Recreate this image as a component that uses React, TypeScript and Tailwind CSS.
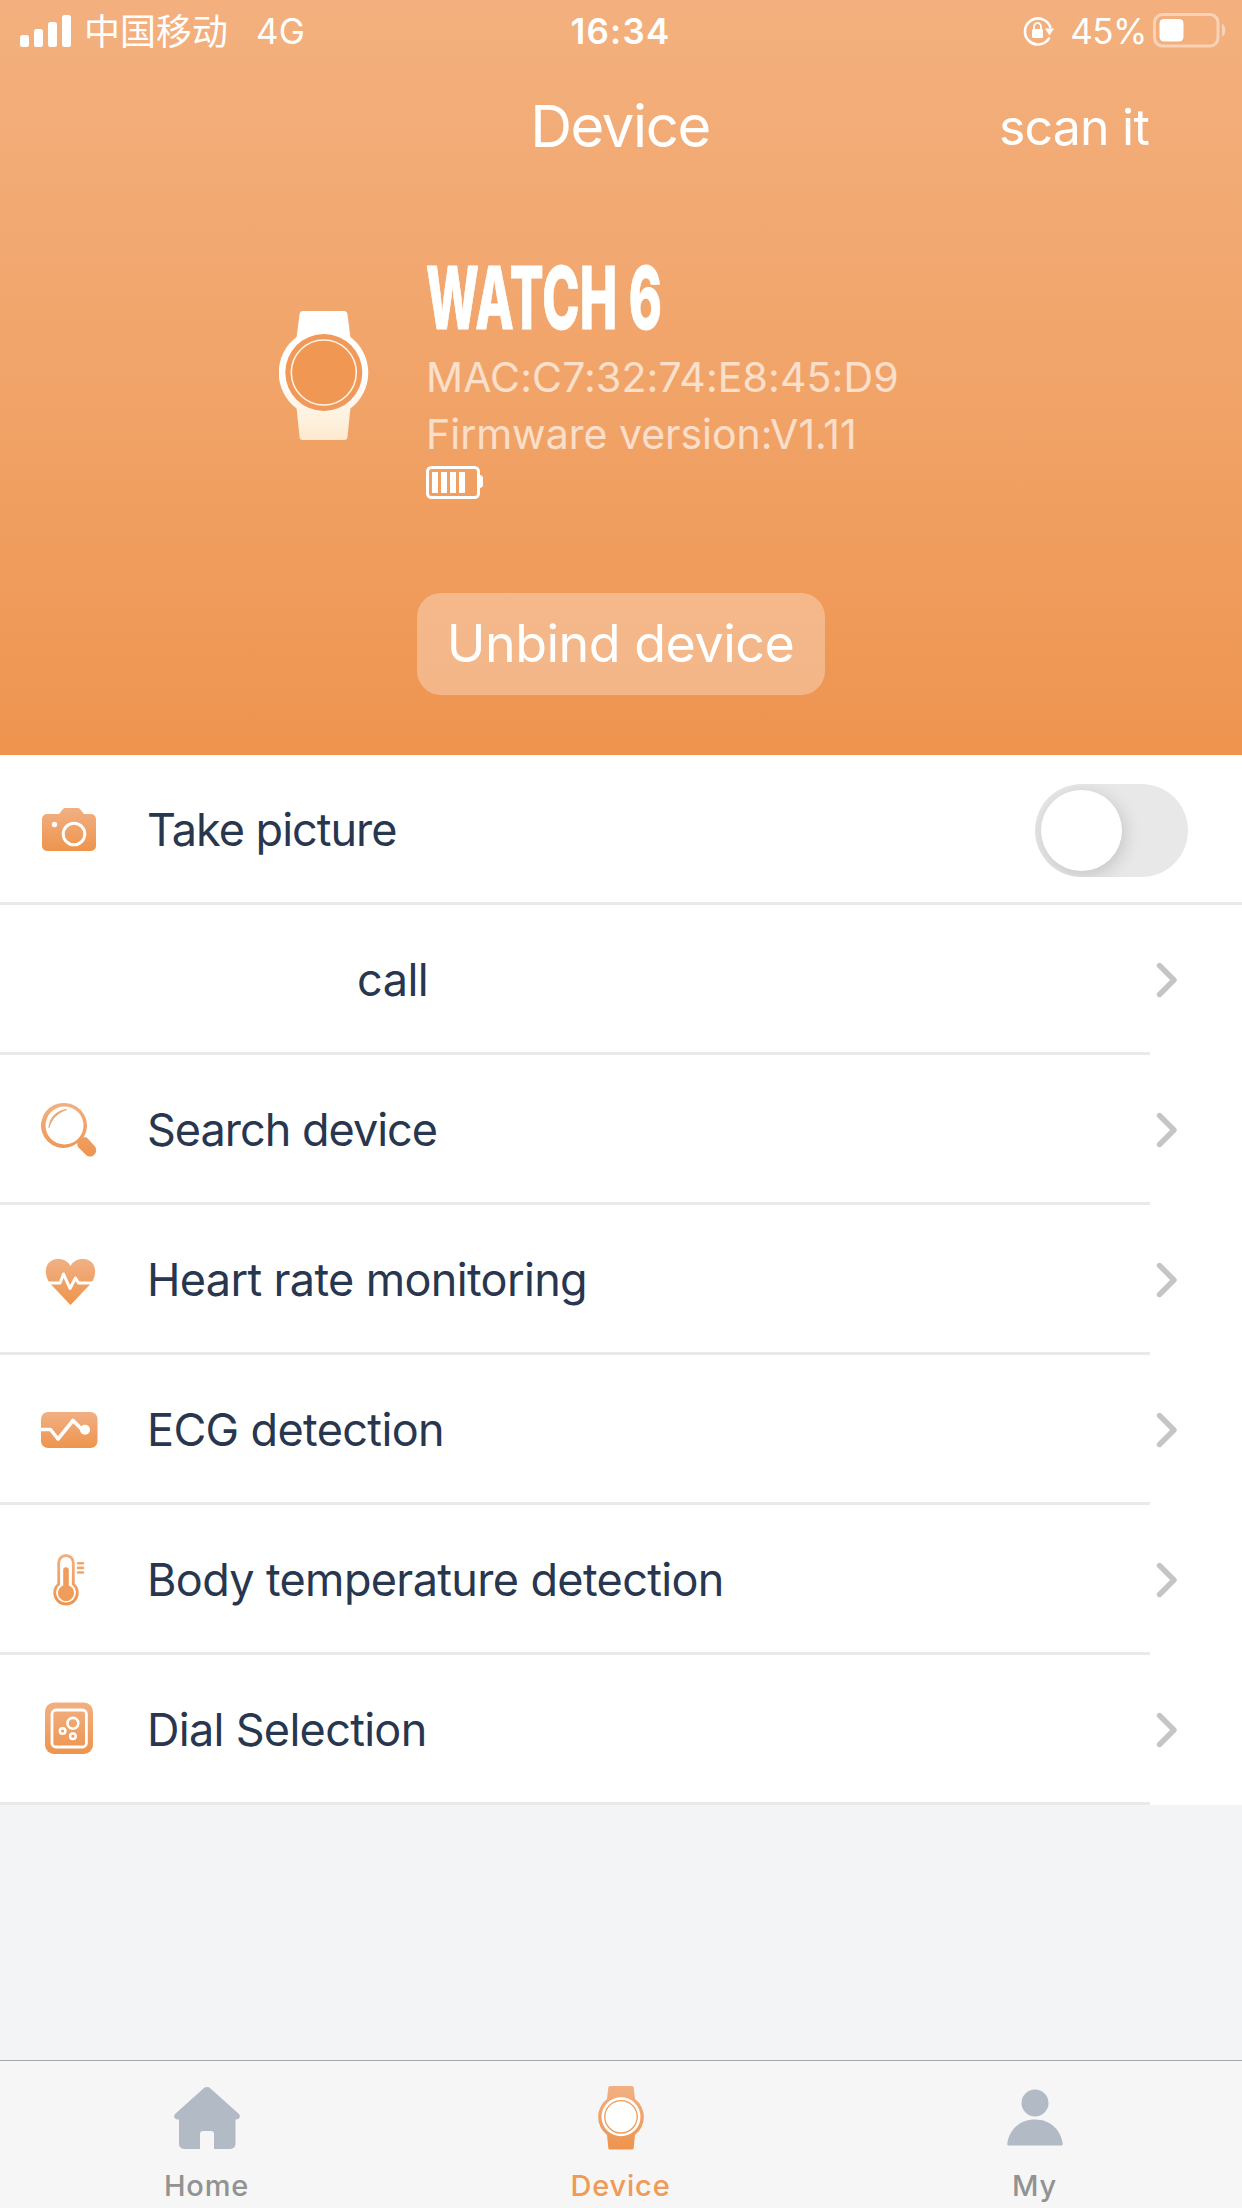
import type { ReactNode } from "react"

type RowProps = {
    label: string
    icon?: ReactNode
    indent?: boolean
    track?: string
}

const Gradient = ({ id }: { id: string }) => (
    <defs>
        <linearGradient id={id} x1="0" y1="0" x2="0" y2="1">
            <stop offset="0" stopColor="#f1b083" />
            <stop offset="1" stopColor="#ee944d" />
        </linearGradient>
    </defs>
)

const CameraIcon = () => (
    <svg width="60" height="60" viewBox="0 0 60 60">
        <Gradient id="camera" />
        <path fill="url(#camera)" d="M8 14h12l4-5c.8-.9 1.600-1 2.500-1h12c1 0 1.800.2 2.500 1l4 5h7a5 5 0 0 1 5 5v27a5 5 0 0 1-5 5H8a5 5 0 0 1-5-5V19a5 5 0 0 1 5-5z" />
        <circle cx="35" cy="34" r="10.800" fill="none" stroke="#fff" strokeWidth="3" />
        <circle cx="15.500" cy="24.500" r="2.700" fill="#fff" />
    </svg>
)

const SearchIcon = () => (
    <svg width="60" height="60" viewBox="0 0 60 60">
        <Gradient id="search" />
        <path
            fill="url(#search)"
            fillRule="evenodd"
            d="M25.500 3a22.500 22.500 0 0 1 19 34.600c1.800-.6 3.300-.1 4.500 1.100l6.500 7.300c2.300 2.600 2.200 6 .2 8.300-2.200 2.600-5.800 3.200-8.600.7l-7.600-7.500c-1.200-1.300-1.500-2.800-1-4.400A22.500 22.500 0 1 1 25.500 3zm0 3.500a19 19 0 1 0 0 38 19 19 0 0 0 0-38z"
        />
        <path d="M10 27.500C11 16.500 18 11 27.500 9.500 19.500 12.500 13 17.500 10 27.500z" fill="#f0a76f" stroke="#f0a76f" strokeWidth="1" />
    </svg>
)

const HeartIcon = () => (
    <svg width="60" height="60" viewBox="0 0 60 60">
        <Gradient id="heart" />
        <path fill="url(#heart)" d="M31.500 55 11.500 34C4 25.500 5 9.500 18.500 9 25 8.800 29 11.500 31.500 16 34 11.500 38 8.800 44.500 9 58 9.500 59 25.500 51.500 34z" />
        <path d="M6 33h15l3.500-9 6.500 14.500L36.500 28l3 5H57" fill="none" stroke="#fff" strokeWidth="3" strokeLinejoin="round" />
    </svg>
)

const EcgIcon = () => (
    <svg width="60" height="60" viewBox="0 0 60 60">
        <Gradient id="ecg" />
        <rect x="2" y="12" width="56.500" height="36" rx="7" fill="url(#ecg)" />
        <path d="M2 29.500h9.500L19 39l15-18.500L42.500 29" fill="none" stroke="#fff" strokeWidth="3.600" strokeLinejoin="round" />
        <circle cx="46" cy="29.800" r="5" fill="#fff" />
    </svg>
)

const ThermometerIcon = () => (
    <svg width="60" height="60" viewBox="0 0 60 60">
        <Gradient id="thermo" />
        <path fill="url(#thermo)" fillRule="evenodd" d="M27 4a8.700 8.700 0 0 1 8.700 8.700V33.500a12.700 12.700 0 1 1-17.400 0V12.700A8.700 8.700 0 0 1 27 4zm0 3a5.900 5.900 0 0 0-5.900 6V34.700a9.900 9.900 0 1 0 11.800 0V13A5.900 5.900 0 0 0 27 7z" />
        <path d="M24.200 20a2.800 2.800 0 0 1 5.600 0v15.500a8 8 0 1 1-5.600 0z" fill="#f09c5b" />
        <path d="M39 13.300h5M39 17.900h5M39 22.500h5" stroke="#f0a76f" strokeWidth="2.600" strokeLinecap="round" />
    </svg>
)

const DialIcon = () => (
    <svg width="60" height="60" viewBox="0 0 60 60">
        <Gradient id="dial" />
        <rect x="6" y="2.500" width="48" height="51.500" rx="9" fill="url(#dial)" />
        <g fill="none" stroke="#fff">
            <rect x="13" y="10" width="34.400" height="37" rx="4" strokeWidth="2.800" />
            <circle cx="33.900" cy="23.300" r="5.400" strokeWidth="2.600" />
            <circle cx="23.600" cy="31" r="2.800" strokeWidth="2.500" />
            <circle cx="33.900" cy="36.200" r="2.800" strokeWidth="2.500" />
        </g>
    </svg>
)

const StatusBar = () => (
    <div className="flex h-[62px] items-center pl-5 pr-[14px] text-[35px] leading-none">
        <div className="flex flex-1 items-center">
            <svg width="52" height="34" viewBox="0 0 52 34" fill="#fff">
                <rect x="0" y="21" width="9" height="12" rx="2.500" />
                <rect x="14" y="15" width="9" height="18" rx="2.500" />
                <rect x="28" y="8" width="9" height="25" rx="2.500" />
                <rect x="42" y="1" width="9" height="32" rx="2.500" />
            </svg>
            <span className="-mt-[4px] ml-3 font-['Noto_Sans_CJK_SC',sans-serif] text-[36px] font-normal">中国移动</span>
            <span className="ml-[28px]">4G</span>
        </div>
        <span className="-ml-[7px] font-semibold tracking-[1.2px]">16:34</span>
        <div className="flex flex-1 items-center justify-end">
            <svg width="34" height="34" viewBox="0 0 34 34" fill="none" stroke="#fff" strokeWidth="2.600">
                <path d="M28.500 23.500A13 13 0 1 1 29.500 14" />
                <path d="M24 14.500h9l-4.500 7z" fill="#fff" stroke="none" />
                <rect x="11" y="15" width="11" height="9" rx="1.500" fill="#fff" stroke="none" />
                <path d="M13 16v-3.500a3.500 3.500 0 0 1 7 0V16" strokeWidth="1.800" />
            </svg>
            <span className="ml-[15px] mr-[6px] tracking-[-0.5px]">45%</span>
            <svg width="75" height="36" viewBox="0 0 75 36">
                <rect x="1.500" y="1.500" width="63.500" height="31.500" rx="8" fill="none" stroke="#fff" strokeOpacity="0.450" strokeWidth="3" />
                <rect x="6.500" y="6" width="24" height="22.500" rx="4.500" fill="#fff" />
                <path d="M69 11c4.500 1 4.500 11.500 0 12.500z" fill="#fff" fillOpacity="0.450" />
            </svg>
        </div>
    </div>
)

const Header = () => (
    <header className="h-[755px] bg-linear-to-b from-[#f3b07e] via-[#f1a469] to-[#ee944f] text-white">
        <StatusBar />
        <div className="grid h-32 grid-cols-[1fr_auto_1fr] items-center">
            <h1 className="col-start-2 -ml-[2px] text-[58px] leading-none tracking-[-1.4px]">Device</h1>
            <span className="mr-[93px] justify-self-end pt-[2px] text-[50px] leading-none tracking-[-0.8px]">scan it</span>
        </div>
        <div className="flex items-start pl-[279px] pt-16">
            <svg className="mt-[57px]" width="90" height="130" viewBox="0 0 90 130">
                <defs>
                    <linearGradient id="band" x1="0" y1="0" x2="0" y2="1">
                        <stop offset="0.500" stopColor="#fff" />
                        <stop offset="1" stopColor="#fdeacf" />
                    </linearGradient>
                </defs>
                <path fill="url(#band)" d="M24 0h41q3 0 3.400 3l3 23a44.700 44.700 0 0 1 0 71.500l-3 29q-.4 2.500-3.400 2.500H24q-3 0-3.400-2.500l-3-29a44.700 44.700 0 0 1 0-71.500l3-23q.4-3 3.400-3z" />
                <circle cx="44.800" cy="61.500" r="38.500" fill="#f0995a" />
                <circle cx="44.800" cy="61.500" r="32.500" fill="#ef9753" stroke="#fff3e2" strokeWidth="1.600" />
            </svg>
            <div className="ml-[57px]">
                <div className="h-[87px] w-[240px]">
                    <span className="inline-block origin-left scale-x-[0.582] whitespace-nowrap text-[86px] font-extrabold leading-[88px] tracking-[0.5px] [-webkit-text-stroke:1px_white]">WATCH 6</span>
                </div>
                <p className="mt-2 text-[41px] leading-[57px] tracking-[0.1px] text-white/65">MAC:C7:32:74:E8:45:D9</p>
                <p className="text-[41px] leading-[57px] text-white/65">Firmware version:V1.11</p>
                <svg className="mt-[3px]" width="58" height="34" viewBox="0 0 58 34" fill="#fff">
                    <rect x="1.500" y="1.500" width="51" height="30" rx="4" fill="none" stroke="#fff" strokeWidth="3" />
                    <rect x="6" y="6" width="6" height="21" />
                    <rect x="15" y="6" width="6" height="21" />
                    <rect x="24" y="6" width="6" height="21" />
                    <rect x="33" y="6" width="6" height="21" />
                    <path d="M54 9c2 .3 3 1.500 3 3v7c0 1.500-1 2.700-3 3z" />
                </svg>
            </div>
        </div>
        <button className="mx-auto mt-[93px] flex h-[102px] w-[408px] items-center justify-center rounded-3xl bg-white/30 pr-[1px] text-[52px] leading-none tracking-[-0.5px]">
            Unbind device
        </button>
    </header>
)

const Row = ({ label, icon, indent, track }: RowProps) => (
    <li className="flex h-[150px] flex-col bg-white">
        <div className="flex flex-1 items-center pl-[39px] pr-[63px] pt-[3px]">
            <div className="h-[60px] w-[60px]">{icon}</div>
            <span className={`${indent ? "ml-[258px]" : "ml-[48px]"} ${track ?? ""} -mt-[2px] flex-1 text-[45px] leading-none text-[#28374f]`}>{label}</span>
            <svg width="24" height="36" viewBox="0 0 24 36">
                <path d="M4.500 3.500 19 18 4.500 32.500" fill="none" stroke="#c5c5c5" strokeWidth="5.400" strokeLinecap="round" strokeLinejoin="round" />
            </svg>
        </div>
        <div className="h-[3px] w-[1150px] bg-[#e9eaea]" />
    </li>
)

const HomeIcon = () => (
    <svg width="66" height="64" viewBox="0 0 66 64" fill="#b2bac6">
        <path d="M29.500 2.500a5 5 0 0 1 7 0L65 28c2 2.500.5 5.500-3 5.500h-.5V58a5 5 0 0 1-5 5H40V48a3 3 0 0 0-3-3h-8a3 3 0 0 0-3 3v15H10a5 5 0 0 1-5-5V33.500H4C.5 33.500-1 30.500 1 28z" />
    </svg>
)

const WatchIcon = () => (
    <svg width="46" height="64" viewBox="0 0 46 64">
        <Gradient id="watch" />
        <path fill="url(#watch)" d="M12 0h22q1.500 0 1.700 1.500L37 13a22.700 22.700 0 0 1 0 36l-1.300 13q-.2 1.500-1.700 1.500H12q-1.500 0-1.700-1.500L9 49a22.700 22.700 0 0 1 0-36l1.300-11.500Q10.500 0 12 0z" />
        <circle cx="23" cy="30.800" r="19.500" fill="#fff" />
        <circle cx="23" cy="30.800" r="16.200" fill="#fff" stroke="#ee9a58" strokeWidth="1.300" />
    </svg>
)

const MyIcon = () => (
    <svg width="56" height="58" viewBox="0 0 56 58" fill="#b2bac6">
        <circle cx="28" cy="14" r="13.500" />
        <path d="M28 30.500c16 0 26 11 27.700 24 .2 1.500-.7 2-2 2H2.300c-1.300 0-2.200-.5-2-2C2 41.500 12 30.500 28 30.500z" />
    </svg>
)

const tabs = [
    { name: "Home", icon: <HomeIcon />, active: false },
    { name: "Device", icon: <WatchIcon />, active: true },
    { name: "My", icon: <MyIcon />, active: false },
]

const rows: RowProps[] = [
    { label: "call", indent: true, track: "tracking-[-0.5px]" },
    { label: "Search device", icon: <SearchIcon />, track: "tracking-[-1px]" },
    { label: "Heart rate monitoring", icon: <HeartIcon />, track: "tracking-[-0.65px]" },
    { label: "ECG detection", icon: <EcgIcon />, track: "tracking-[-0.65px]" },
    { label: "Body temperature detection", icon: <ThermometerIcon />, track: "tracking-[-0.65px]" },
    { label: "Dial Selection", icon: <DialIcon />, track: "tracking-[-0.7px]" },
]

const App = () => {
    return (
        <div className="flex h-[2208px] w-[1242px] flex-col overflow-hidden bg-[#f3f4f6] font-['Inter','Noto_Sans_CJK_SC',sans-serif]">
            <Header />
            <ul className="flex-1">
                <li className="flex h-[150px] flex-col bg-white">
                    <div className="flex flex-1 items-center pl-[39px] pr-[54px] pt-[3px]">
                        <CameraIcon />
                        <span className="-mt-[2px] ml-[48px] flex-1 text-[45px] leading-none tracking-[-1px] text-[#28374f]">Take picture</span>
                        <div className="flex h-[93px] w-[153px] items-center overflow-hidden rounded-full bg-[#e8e8e8] pl-[6px]">
                            <div className="h-[81px] w-[81px] rounded-full bg-white shadow-[2px_4px_18px_rgba(0,0,0,0.16)]" />
                        </div>
                    </div>
                    <div className="h-[3px] bg-[#e9eaea]" />
                </li>
                {rows.map(row => (
                    <Row key={row.label} {...row} />
                ))}
            </ul>
            <nav className="grid h-[148px] grid-cols-3 border-t border-[#a3aba7] bg-[#f6f6f6]">
                {tabs.map(tab => (
                    <div key={tab.name} className="flex flex-col items-center pr-[1px] pt-6">
                        <div className="flex h-[66px] items-center">{tab.icon}</div>
                        <span className={`mt-[19px] text-[29px] font-medium leading-[32px] tracking-[0.8px] ${tab.active ? "text-[#ef9a57]" : "text-[#929292]"}`}>{tab.name}</span>
                    </div>
                ))}
            </nav>
        </div>
    )
}

export default App
